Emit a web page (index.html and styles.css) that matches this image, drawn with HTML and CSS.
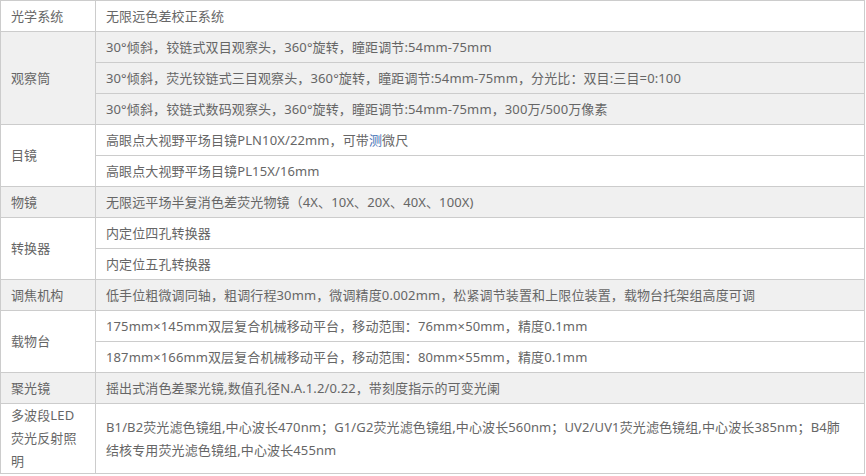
FILE: index.html
```html
<!DOCTYPE html>
<html lang="zh-CN">
<head>
<meta charset="utf-8">
<title>参数</title>
<link rel="stylesheet" href="styles.css">
</head>
<body>
<table class="spec">
  <colgroup><col class="c-name"><col class="c-val"></colgroup>
  <tbody class="g-white">
    <tr><td>光学系统</td><td>无限远色差校正系统</td></tr>
  </tbody>
  <tbody class="g-gray">
    <tr><td rowspan="3">观察筒</td><td>30°倾斜，铰链式双目观察头，360°旋转，瞳距调节:54mm-75mm</td></tr>
    <tr><td>30°倾斜，荧光铰链式三目观察头，360°旋转，瞳距调节:54mm-75mm，分光比：双目:三目=0:100</td></tr>
    <tr><td>30°倾斜，铰链式数码观察头，360°旋转，瞳距调节:54mm-75mm，300万/500万像素</td></tr>
  </tbody>
  <tbody class="g-white">
    <tr><td rowspan="2">目镜</td><td>高眼点大视野平场目镜PLN10X/22mm，可带<span class="link">测</span>微尺</td></tr>
    <tr><td>高眼点大视野平场目镜PL15X/16mm</td></tr>
  </tbody>
  <tbody class="g-gray">
    <tr><td>物镜</td><td>无限远平场半复消色差荧光物镜（4X、10X、20X、40X、100X)</td></tr>
  </tbody>
  <tbody class="g-white">
    <tr><td rowspan="2">转换器</td><td>内定位四孔转换器</td></tr>
    <tr><td>内定位五孔转换器</td></tr>
  </tbody>
  <tbody class="g-gray">
    <tr><td>调焦机构</td><td>低手位粗微调同轴，粗调行程30mm，微调精度0.002mm，松紧调节装置和上限位装置，载物台托架组高度可调</td></tr>
  </tbody>
  <tbody class="g-white">
    <tr><td rowspan="2">载物台</td><td>175mm×145mm双层复合机械移动平台，移动范围：76mm×50mm，精度0.1mm</td></tr>
    <tr><td>187mm×166mm双层复合机械移动平台，移动范围：80mm×55mm，精度0.1mm</td></tr>
  </tbody>
  <tbody class="g-gray">
    <tr><td>聚光镜</td><td>摇出式消色差聚光镜,数值孔径N.A.1.2/0.22，带刻度指示的可变光阑</td></tr>
  </tbody>
  <tbody class="g-white">
    <tr><td>多波段LED荧光反射照明</td><td>B1/B2荧光滤色镜组,中心波长470nm；G1/G2荧光滤色镜组,中心波长560nm；UV2/UV1荧光滤色镜组,中心波长385nm；B4肺结核专用荧光滤色镜组,中心波长455nm</td></tr>
  </tbody>
</table>
</body>
</html>
```

FILE: styles.css
```css
html, body {
  margin: 0;
  padding: 0;
  background: #fff;
}

.spec {
  border-collapse: collapse;
  width: 865px;
  table-layout: fixed;
  font-family: "Noto Sans", "Noto Sans CJK SC", sans-serif;
  font-size: 13px;
  letter-spacing: 0.12px;
  color: #666;
}

.c-name { width: 95px; }

.spec td {
  border: 1px solid #cccccc;
  height: 30px;
  padding: 0 12px 0 10px;
  line-height: 23px;
  vertical-align: middle;
}

.g-gray td { background: #f0f0f0; }
.g-white td { background: #fff; }

.link { color: #3f6fb5; }
```
